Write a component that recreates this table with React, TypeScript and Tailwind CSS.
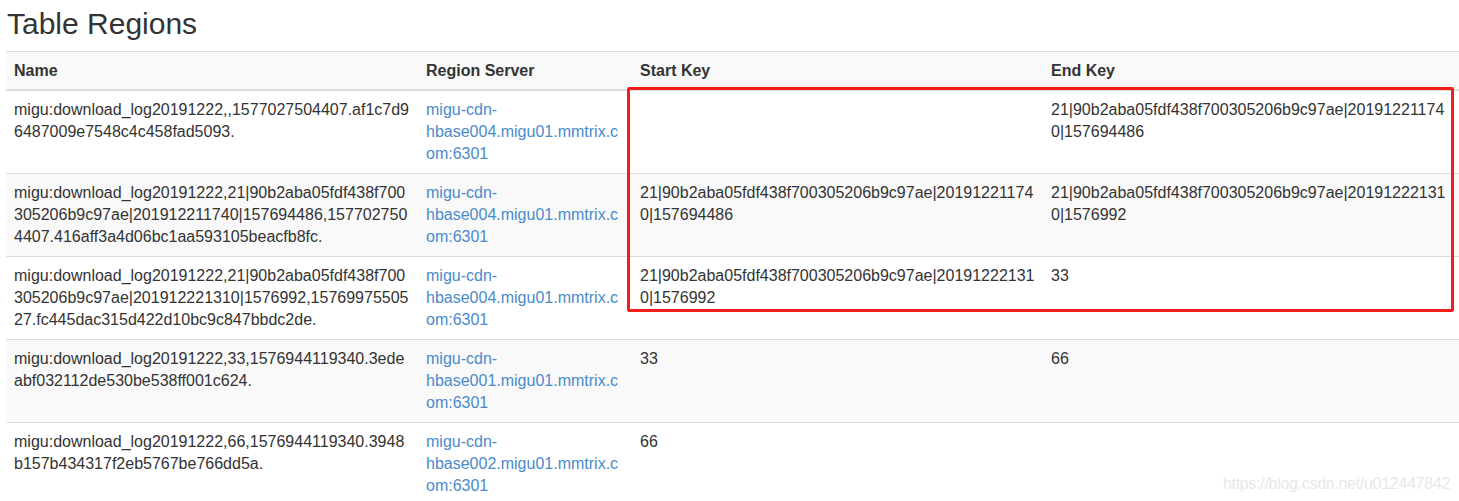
import React from "react";

type Row = {
  name: string[];
  server: string[];
  start: string[];
  end: string[];
};

const rows: Row[] = [
  {
    name: ["migu:download_log20191222,,1577027504407.af1c7d9", "6487009e7548c4c458fad5093."],
    server: ["migu-cdn-", "hbase004.migu01.mmtrix.c", "om:6301"],
    start: [],
    end: ["21|90b2aba05fdf438f700305206b9c97ae|20191221174", "0|157694486"],
  },
  {
    name: [
      "migu:download_log20191222,21|90b2aba05fdf438f700",
      "305206b9c97ae|201912211740|157694486,157702750",
      "4407.416aff3a4d06bc1aa593105beacfb8fc.",
    ],
    server: ["migu-cdn-", "hbase004.migu01.mmtrix.c", "om:6301"],
    start: ["21|90b2aba05fdf438f700305206b9c97ae|20191221174", "0|157694486"],
    end: ["21|90b2aba05fdf438f700305206b9c97ae|20191222131", "0|1576992"],
  },
  {
    name: [
      "migu:download_log20191222,21|90b2aba05fdf438f700",
      "305206b9c97ae|201912221310|1576992,15769975505",
      "27.fc445dac315d422d10bc9c847bbdc2de.",
    ],
    server: ["migu-cdn-", "hbase004.migu01.mmtrix.c", "om:6301"],
    start: ["21|90b2aba05fdf438f700305206b9c97ae|20191222131", "0|1576992"],
    end: ["33"],
  },
  {
    name: ["migu:download_log20191222,33,1576944119340.3ede", "abf032112de530be538ff001c624."],
    server: ["migu-cdn-", "hbase001.migu01.mmtrix.c", "om:6301"],
    start: ["33"],
    end: ["66"],
  },
  {
    name: ["migu:download_log20191222,66,1576944119340.3948", "b157b434317f2eb5767be766dd5a."],
    server: ["migu-cdn-", "hbase002.migu01.mmtrix.c", "om:6301"],
    start: ["66"],
    end: [],
  },
];

const Lines = ({ lines }: { lines: string[] }) => (
  <>
    {lines.map((l, i) => (
      <span key={i} className="block whitespace-nowrap">
        {l}
      </span>
    ))}
  </>
);

const App = () => {
  return (
    <div
      className="relative h-[501px] w-[1459px] overflow-hidden bg-white pl-[6px] text-[#333] text-[16px] leading-[22px]"
      style={{ fontFamily: '"Liberation Sans", Arial, sans-serif' }}
    >
      <h2 className="mb-[3px] pl-[1px] text-[30px] leading-[48px] font-normal">Table Regions</h2>
      <table className="w-[1460px] table-fixed border-collapse">
        <colgroup>
          <col className="w-[412px]" />
          <col className="w-[214px]" />
          <col className="w-[411px]" />
          <col />
        </colgroup>
        <thead>
          <tr className="bg-[#f9f9f9] border-t border-[#ddd]">
            <th className="border-b-2 border-[#ddd] px-2 pt-2 pb-[7px] text-left font-bold">Name</th>
            <th className="border-b-2 border-[#ddd] px-2 pt-2 pb-[7px] text-left font-bold">Region Server</th>
            <th className="border-b-2 border-[#ddd] px-2 pt-2 pb-[7px] text-left font-bold">Start Key</th>
            <th className="border-b-2 border-[#ddd] px-2 pt-2 pb-[7px] text-left font-bold">End Key</th>
          </tr>
        </thead>
        <tbody>
          {rows.map((r, i) => (
            <tr key={i} className={i % 2 === 1 ? "bg-[#f9f9f9]" : "bg-white"}>
              <td className="border-t border-[#ddd] px-2 py-2 align-top">
                <Lines lines={r.name} />
              </td>
              <td className="border-t border-[#ddd] px-2 py-2 align-top text-[#4a8bcb]">
                <Lines lines={r.server} />
              </td>
              <td className="border-t border-[#ddd] px-2 py-2 align-top">
                <Lines lines={r.start} />
              </td>
              <td className="border-t border-[#ddd] px-2 py-2 align-top">
                <Lines lines={r.end} />
              </td>
            </tr>
          ))}
        </tbody>
      </table>

      {/* red annotation box */}
      <div className="pointer-events-none absolute left-[627px] top-[87px] h-[225px] w-[827px] rounded-[2px] border-[3px] border-[#f51c1c]" />

      <div className="absolute right-[9px] bottom-[7px] text-[16px] leading-[20px] text-[#e8e8e8] tracking-[-0.3px]">
        https://blog.csdn.net/u012447842
      </div>
    </div>
  );
};

export default App;
